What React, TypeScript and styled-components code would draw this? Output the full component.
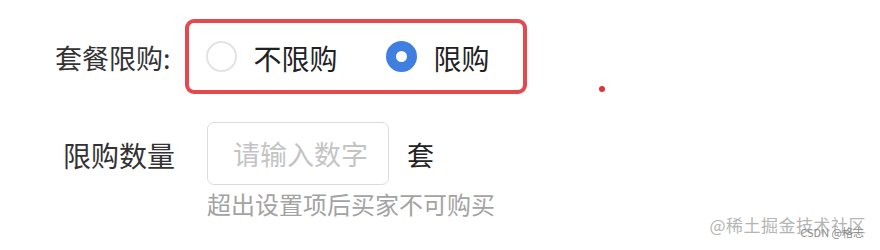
import { useState } from "react";
import styled, { createGlobalStyle } from "styled-components";

const GlobalStyle = createGlobalStyle`
  html, body {
    margin: 0;
    padding: 0;
    background: #fff;
    font-family: "Noto Sans CJK SC", "Noto Sans", sans-serif;
  }
`;

const App = () => {
  const [limited, setLimited] = useState(true);

  return (
    <>
      <GlobalStyle />
      <Page>
        <OptionRow>
          <Label>套餐限购:</Label>
          <Highlight>
            <Choice onClick={() => setLimited(false)}>
              <Radio checked={!limited} />
              <ChoiceText>不限购</ChoiceText>
            </Choice>
            <Choice onClick={() => setLimited(true)}>
              <Radio checked={limited} />
              <ChoiceText>限购</ChoiceText>
            </Choice>
          </Highlight>
          <Dot />
        </OptionRow>

        <FieldRow>
          <FieldLabel>限购数量</FieldLabel>
          <InputLine>
            <NumberInput placeholder="请输入数字" />
            <Unit>套</Unit>
          </InputLine>
          <Hint>超出设置项后买家不可购买</Hint>
        </FieldRow>

        <Watermark>
          @稀土掘金技术社区
          <SubMark>CSDN @格志</SubMark>
        </Watermark>
      </Page>
    </>
  );
};

//Styled components

const Page = styled.div`
  position: relative;
  width: 880px;
  height: 250px;
  box-sizing: border-box;
  padding-top: 19px;
  overflow: hidden;
`;

const OptionRow = styled.div`
  display: flex;
  align-items: center;
  padding-left: 55px;
`;

const Label = styled.span`
  font-size: 27px;
  line-height: 32px;
  color: #333;
  margin-right: 14px;
  margin-top: 3px;
`;

const Highlight = styled.div`
  display: flex;
  align-items: center;
  gap: 48px;
  box-sizing: border-box;
  height: 75px;
  padding: 0 33px 0 17px;
  border: 4px solid #e5484d;
  border-radius: 9px;
`;

const Choice = styled.label`
  display: flex;
  align-items: center;
  gap: 17px;
  cursor: pointer;
`;

const Radio = styled.span<{ checked: boolean }>`
  width: 31px;
  height: 31px;
  box-sizing: border-box;
  border-radius: 50%;
  background: #fff;
  border: ${(props) => (props.checked ? "10.5px solid #3f7fe0" : "2px solid #e3e3e3")};
`;

const ChoiceText = styled.span`
  font-size: 28px;
  line-height: 32px;
  color: #222;
  margin-top: 2px;
`;

const Dot = styled.span`
  align-self: flex-end;
  width: 6px;
  height: 6px;
  border-radius: 50%;
  background: #e0323c;
  margin: 0 0 2px 72px;
`;

const FieldRow = styled.div`
  display: grid;
  grid-template-columns: 112px auto;
  column-gap: 32px;
  align-items: center;
  padding-left: 63px;
  margin-top: 28px;
`;

const FieldLabel = styled.span`
  font-size: 28px;
  line-height: 32px;
  color: #333;
  margin-top: 3px;
`;

const InputLine = styled.div`
  display: flex;
  align-items: center;
  gap: 18px;
`;

const NumberInput = styled.input`
  width: 182px;
  height: 63px;
  box-sizing: border-box;
  padding: 0 0 0 25px;
  border: 1.5px solid #dcdcdc;
  border-radius: 7px;
  font-family: inherit;
  font-size: 27px;
  color: #222;
  outline: none;

  &::placeholder {
    color: #c4c4c4;
  }
`;

const Unit = styled.span`
  font-size: 27px;
  line-height: 32px;
  color: #222;
  margin-top: 2px;
`;

const Hint = styled.span`
  grid-column: 2;
  font-size: 24px;
  line-height: 30px;
  color: #a3a3a3;
  margin-top: 4px;
`;

const Watermark = styled.div`
  position: absolute;
  right: 14px;
  bottom: 14px;
  font-size: 17px;
  line-height: 22px;
  color: #b5b5b5;
  letter-spacing: 0.5px;
`;

const SubMark = styled.span`
  position: absolute;
  right: 2px;
  bottom: -2px;
  font-size: 11px;
  line-height: 12px;
  color: #8a8a8a;
  letter-spacing: 0;
`;

export default App;
